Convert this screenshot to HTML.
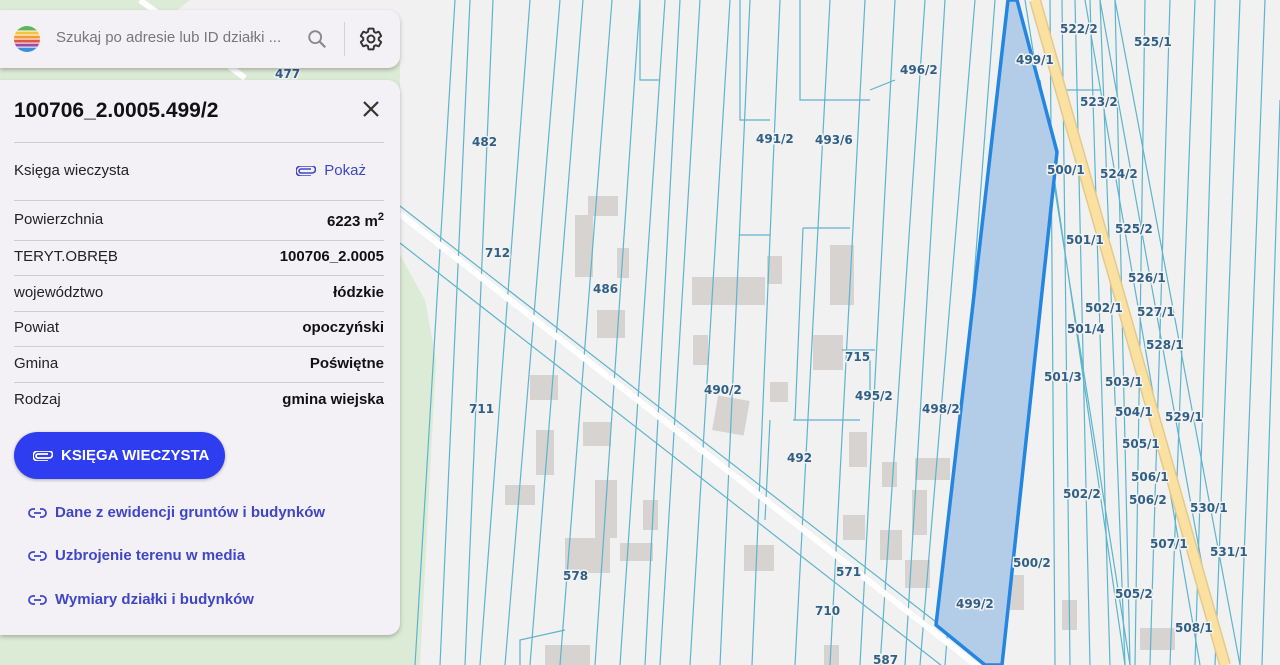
<!DOCTYPE html>
<html><head><meta charset="utf-8"><style>
*{margin:0;padding:0;box-sizing:border-box}
body{width:1280px;height:665px;overflow:hidden;position:relative;font-family:"Liberation Sans",Roboto,sans-serif;background:#f1f1f1}
svg.map{position:absolute;left:0;top:0}
.lbl{font-family:"DejaVu Sans","Liberation Sans",sans-serif;font-size:12px;font-weight:bold;fill:#2f5f86;stroke:#f2f2f2;stroke-width:3px;paint-order:stroke}
.search{position:absolute;left:0;top:10px;width:400px;height:58px;background:#f4f1f6;border-radius:0 12px 12px 0;box-shadow:0 2px 4px rgba(0,0,0,.25)}
.panel{position:absolute;left:0;top:80px;width:400px;height:555px;background:#f4f1f6;border-radius:0 12px 12px 0;box-shadow:0 2px 4px rgba(0,0,0,.25)}
.row{position:absolute;left:14px;width:370px;font-size:15px;color:#222;display:flex;justify-content:space-between}
.row b{color:#111}
.hr{position:absolute;left:14px;width:370px;height:1px;background:#d0ccd4}
.lnk{position:absolute;left:28px;font-size:15px;color:#3f47c7;font-weight:bold;display:flex;align-items:center;gap:8px}
</style></head><body>
<svg class="map" width="1280" height="665" viewBox="0 0 1280 665">
<rect width="1280" height="665" fill="#f1f1f1"/>
<path d="M0 0 H190 L175 12 H0Z M0 600 H420 V665 H0Z M400 255 L425 300 L436 360 L420 665 H400Z" fill="#dcebd5"/>
<rect x="0" y="60" width="400" height="560" fill="#dcebd5"/>
<path d="M140 0 L245 78" stroke="#fff" stroke-width="6"/>
<g fill="#d6d3d0">
<rect x="588" y="196" width="30" height="20"/><rect x="575" y="215" width="18" height="62"/><rect x="617" y="248" width="12" height="30"/>
<rect x="692" y="277" width="73" height="28"/><rect x="767" y="256" width="15" height="28"/><rect x="830" y="245" width="24" height="60"/>
<rect x="597" y="310" width="28" height="28"/><rect x="693" y="335" width="15" height="30"/><rect x="813" y="335" width="30" height="35"/>
<rect x="530" y="375" width="28" height="25"/><rect x="715" y="398" width="32" height="35" transform="rotate(10 731 415)"/><rect x="770" y="382" width="18" height="20"/>
<rect x="583" y="422" width="28" height="24"/><rect x="536" y="430" width="18" height="45"/><rect x="849" y="432" width="18" height="35"/>
<rect x="505" y="485" width="30" height="20"/><rect x="595" y="480" width="22" height="58"/><rect x="643" y="500" width="15" height="30"/>
<rect x="565" y="538" width="45" height="35"/><rect x="620" y="543" width="33" height="18"/><rect x="744" y="545" width="30" height="26"/>
<rect x="912" y="490" width="15" height="45"/><rect x="880" y="530" width="22" height="30"/><rect x="843" y="515" width="22" height="25"/>
<rect x="915" y="458" width="35" height="22"/><rect x="905" y="560" width="25" height="28"/><rect x="882" y="462" width="15" height="25"/>
<rect x="970" y="480" width="45" height="20"/><rect x="1062" y="600" width="15" height="30"/><rect x="1140" y="628" width="35" height="22"/>
<rect x="545" y="645" width="45" height="20"/><rect x="824" y="645" width="15" height="20"/><rect x="1010" y="575" width="14" height="35"/>
</g>
<g stroke="#5db4cd" stroke-width="1.2" fill="none">
<path d="M455 0 L415 665 M470 0 L440 665 M493 0 L465 665 M530 0 L480 665 M560 0 L505 665 M583 0 L530 665 M612 0 L560 665 M640 0 L595 665 M665 0 L620 665 M680 0 L645 665 M700 0 L660 665 M730 0 L690 665 M750 0 L720 665 M780 0 L752 665 M830 0 L795 665 M865 0 L830 665 M895 0 L860 665 M925 0 L880 665 M945 0 L905 665 M975 0 L920 665 M995 0 L945 665"/>
<path d="M1050 0 L1055 665 M1062 0 L1070 665 M1075 0 L1090 665 M1090 0 L1110 665 M1100 0 L1125 665 M1115 0 L1130 665"/>
<path d="M1025 0 L1130 665 M1040 80 L1125 665 M1085 0 L1200 665 M1100 0 L1220 665 M1115 0 L1240 665"/>
<path d="M1145 0 L1135 665 M1170 0 L1150 665 M1195 0 L1170 665 M1215 0 L1195 665 M1240 0 L1215 665 M1265 0 L1240 665 M1280 100 L1262 665"/>
<path d="M640 0 V80 H660 M740 0 L740 120 H770 M800 0 V100 H870 M870 90 L895 80 M1060 90 H1100 M740 235 H770 M803 228 L795 420 M803 228 H850 M793 420 H860 M770 420 L765 520 M842 350 H875 M870 360 V400 M565 630 L520 640 V665"/>
<path d="M400 206 L985 660 M400 243 L960 680"/>
</g>
<path d="M400 214 L985 672" stroke="#fff" stroke-width="6"/>
<path d="M1035 0 L1225 665" stroke="#e3c98a" stroke-width="12"/>
<path d="M1035 0 L1225 665" stroke="#fbe1a1" stroke-width="9"/>
<path d="M1008 0 L1017 0 L1057 152 L1002 665 L985 665 L936 625 Z" fill="#b3cde9" stroke="#2386e0" stroke-width="3.5" stroke-linejoin="round"/>
<g class="lbl">
<text x="275" y="78">477</text><text x="472" y="146">482</text><text x="485" y="257">712</text><text x="593" y="293">486</text>
<text x="756" y="143">491/2</text><text x="815" y="144">493/6</text><text x="900" y="74">496/2</text><text x="1016" y="64">499/1</text>
<text x="1060" y="33">522/2</text><text x="1134" y="46">525/1</text><text x="1080" y="106">523/2</text><text x="1047" y="174">500/1</text>
<text x="1100" y="178">524/2</text><text x="1066" y="244">501/1</text><text x="1115" y="233">525/2</text><text x="1128" y="282">526/1</text>
<text x="1085" y="312">502/1</text><text x="1137" y="316">527/1</text><text x="1067" y="333">501/4</text><text x="1146" y="349">528/1</text>
<text x="845" y="361">715</text><text x="704" y="394">490/2</text><text x="855" y="400">495/2</text><text x="922" y="413">498/2</text>
<text x="1044" y="381">501/3</text><text x="1105" y="386">503/1</text><text x="1115" y="416">504/1</text><text x="1165" y="421">529/1</text>
<text x="469" y="413">711</text><text x="787" y="462">492</text><text x="1122" y="448">505/1</text><text x="1131" y="481">506/1</text>
<text x="1063" y="498">502/2</text><text x="1129" y="504">506/2</text><text x="1190" y="512">530/1</text><text x="1150" y="548">507/1</text>
<text x="1210" y="556">531/1</text><text x="1013" y="567">500/2</text><text x="563" y="580">578</text><text x="836" y="576">571</text>
<text x="1115" y="598">505/2</text><text x="956" y="608">499/2</text><text x="815" y="615">710</text><text x="1175" y="632">508/1</text>
<text x="873" y="664">587</text>
</g>
</svg>

<div class="search">
 <svg style="position:absolute;left:14px;top:16px" width="26" height="26" viewBox="0 0 26 26">
  <clipPath id="c"><circle cx="13" cy="13" r="13"/></clipPath>
  <g clip-path="url(#c)"><rect y="0" width="26" height="5" fill="#5fb65a"/><rect y="5" width="26" height="4" fill="#f5c43c"/><rect y="9" width="26" height="4" fill="#f29b36"/><rect y="13" width="26" height="4" fill="#e4553f"/><rect y="17" width="26" height="4" fill="#9c4aa8"/><rect y="21" width="26" height="5" fill="#3a8fd6"/>
  <rect y="4.5" width="26" height="1" fill="#fff"/><rect y="8.6" width="26" height="1" fill="#fff"/><rect y="12.6" width="26" height="1" fill="#fff"/><rect y="16.6" width="26" height="1" fill="#fff"/><rect y="20.6" width="26" height="1" fill="#fff"/></g>
 </svg>
 <div style="position:absolute;left:56px;top:19px;font-size:15px;color:#777">Szukaj po adresie lub ID działki ...</div>
 <svg style="position:absolute;left:306px;top:18px" width="22" height="22" viewBox="0 0 24 24"><circle cx="10" cy="10" r="6.5" fill="none" stroke="#888" stroke-width="2"/><path d="M15 15 L21 21" stroke="#888" stroke-width="2.4"/></svg>
 <div style="position:absolute;left:344px;top:12px;width:1px;height:34px;background:#d4d0d8"></div>
 <svg style="position:absolute;left:358px;top:16px" width="26" height="26" viewBox="0 0 24 24"><path fill="none" stroke="#333" stroke-width="1.8" stroke-linejoin="round" d="M19.14 12.94c.04-.3.06-.61.06-.94 0-.32-.02-.64-.07-.94l2.03-1.58a.49.49 0 0 0 .12-.61l-1.92-3.32a.49.49 0 0 0-.59-.22l-2.39.96c-.5-.38-1.03-.7-1.62-.94l-.36-2.54a.48.48 0 0 0-.48-.41h-3.84c-.24 0-.43.17-.47.41l-.36 2.540c-.59.24-1.13.57-1.62.94l-2.39-.96a.48.48 0 0 0-.59.22L2.74 8.87c-.12.21-.08.47.12.61l2.03 1.58c-.05.3-.09.63-.09.94s.02.64.07.94l-2.030 1.58a.49.49 0 0 0-.12.61l1.92 3.32c.12.22.37.29.59.22l2.39-.96c.5.38 1.03.7 1.62.94l.36 2.54c.05.24.24.41.48.41h3.84c.24 0 .44-.17.47-.41l.36-2.54c.59-.24 1.13-.56 1.62-.94l2.39.96c.22.08.47 0 .59-.22l1.92-3.32c.12-.22.07-.47-.12-.61z"/><circle cx="12" cy="12" r="3.2" fill="none" stroke="#333" stroke-width="1.8"/></svg>
</div>

<div class="panel">
 <div style="position:absolute;left:14px;top:19px;font-size:21px;font-weight:bold;color:#111">100706_2.0005.499/2</div>
 <svg style="position:absolute;left:361px;top:19px" width="20" height="20" viewBox="0 0 20 20"><path d="M3 3 L17 17 M17 3 L3 17" stroke="#333" stroke-width="2.2"/></svg>
 <div class="hr" style="top:62px"></div>
 <div class="row" style="top:82px"><span>Księga wieczysta</span><span style="color:#3f47c7;margin-right:18px;display:flex;align-items:center;gap:8px"><svg width="20" height="10" viewBox="0 0 20 10"><path d="M15 3 H5 a2 2 0 0 0 0 4 H16 a3.5 3.5 0 0 0 0-7 H5 a5 5 0 0 0 0 10 H15" fill="none" stroke="#3f47c7" stroke-width="1.6"/></svg>Pokaż</span></div>
 <div class="hr" style="top:120px"></div>
 <div class="row" style="top:131px"><span>Powierzchnia</span><b>6223 m<sup style="font-size:11px">2</sup></b></div>
 <div class="hr" style="top:160px"></div>
 <div class="row" style="top:168px"><span>TERYT.OBRĘB</span><b>100706_2.0005</b></div>
 <div class="hr" style="top:195px"></div>
 <div class="row" style="top:204px"><span>województwo</span><b>łódzkie</b></div>
 <div class="hr" style="top:231px"></div>
 <div class="row" style="top:239px"><span>Powiat</span><b>opoczyński</b></div>
 <div class="hr" style="top:266px"></div>
 <div class="row" style="top:275px"><span>Gmina</span><b>Poświętne</b></div>
 <div class="hr" style="top:302px"></div>
 <div class="row" style="top:311px"><span>Rodzaj</span><b>gmina wiejska</b></div>
 <div style="position:absolute;left:14px;top:352px;width:211px;height:47px;border-radius:24px;background:#2f3df0;color:#fff;font-size:15px;font-weight:bold;display:flex;align-items:center;padding-left:19px;gap:8px;box-shadow:0 1px 3px rgba(0,0,0,.3)"><svg width="20" height="10" viewBox="0 0 20 10"><path d="M15 3 H5 a2 2 0 0 0 0 4 H16 a3.5 3.5 0 0 0 0-7 H5 a5 5 0 0 0 0 10 H15" fill="none" stroke="#fff" stroke-width="1.8"/></svg>KSIĘGA WIECZYSTA</div>
 <div class="lnk" style="top:424px"><svg width="19" height="10" viewBox="0 0 19 10"><path d="M7 1 H5 a4 4 0 0 0 0 8 H7 M12 1 H14 a4 4 0 0 1 0 8 H12 M6 5 H13" fill="none" stroke="#3f47c7" stroke-width="1.8"/></svg>Dane z ewidencji gruntów i budynków</div>
 <div class="lnk" style="top:467px"><svg width="19" height="10" viewBox="0 0 19 10"><path d="M7 1 H5 a4 4 0 0 0 0 8 H7 M12 1 H14 a4 4 0 0 1 0 8 H12 M6 5 H13" fill="none" stroke="#3f47c7" stroke-width="1.8"/></svg>Uzbrojenie terenu w media</div>
 <div class="lnk" style="top:511px"><svg width="19" height="10" viewBox="0 0 19 10"><path d="M7 1 H5 a4 4 0 0 0 0 8 H7 M12 1 H14 a4 4 0 0 1 0 8 H12 M6 5 H13" fill="none" stroke="#3f47c7" stroke-width="1.8"/></svg>Wymiary działki i budynków</div>
</div>
</body></html>
